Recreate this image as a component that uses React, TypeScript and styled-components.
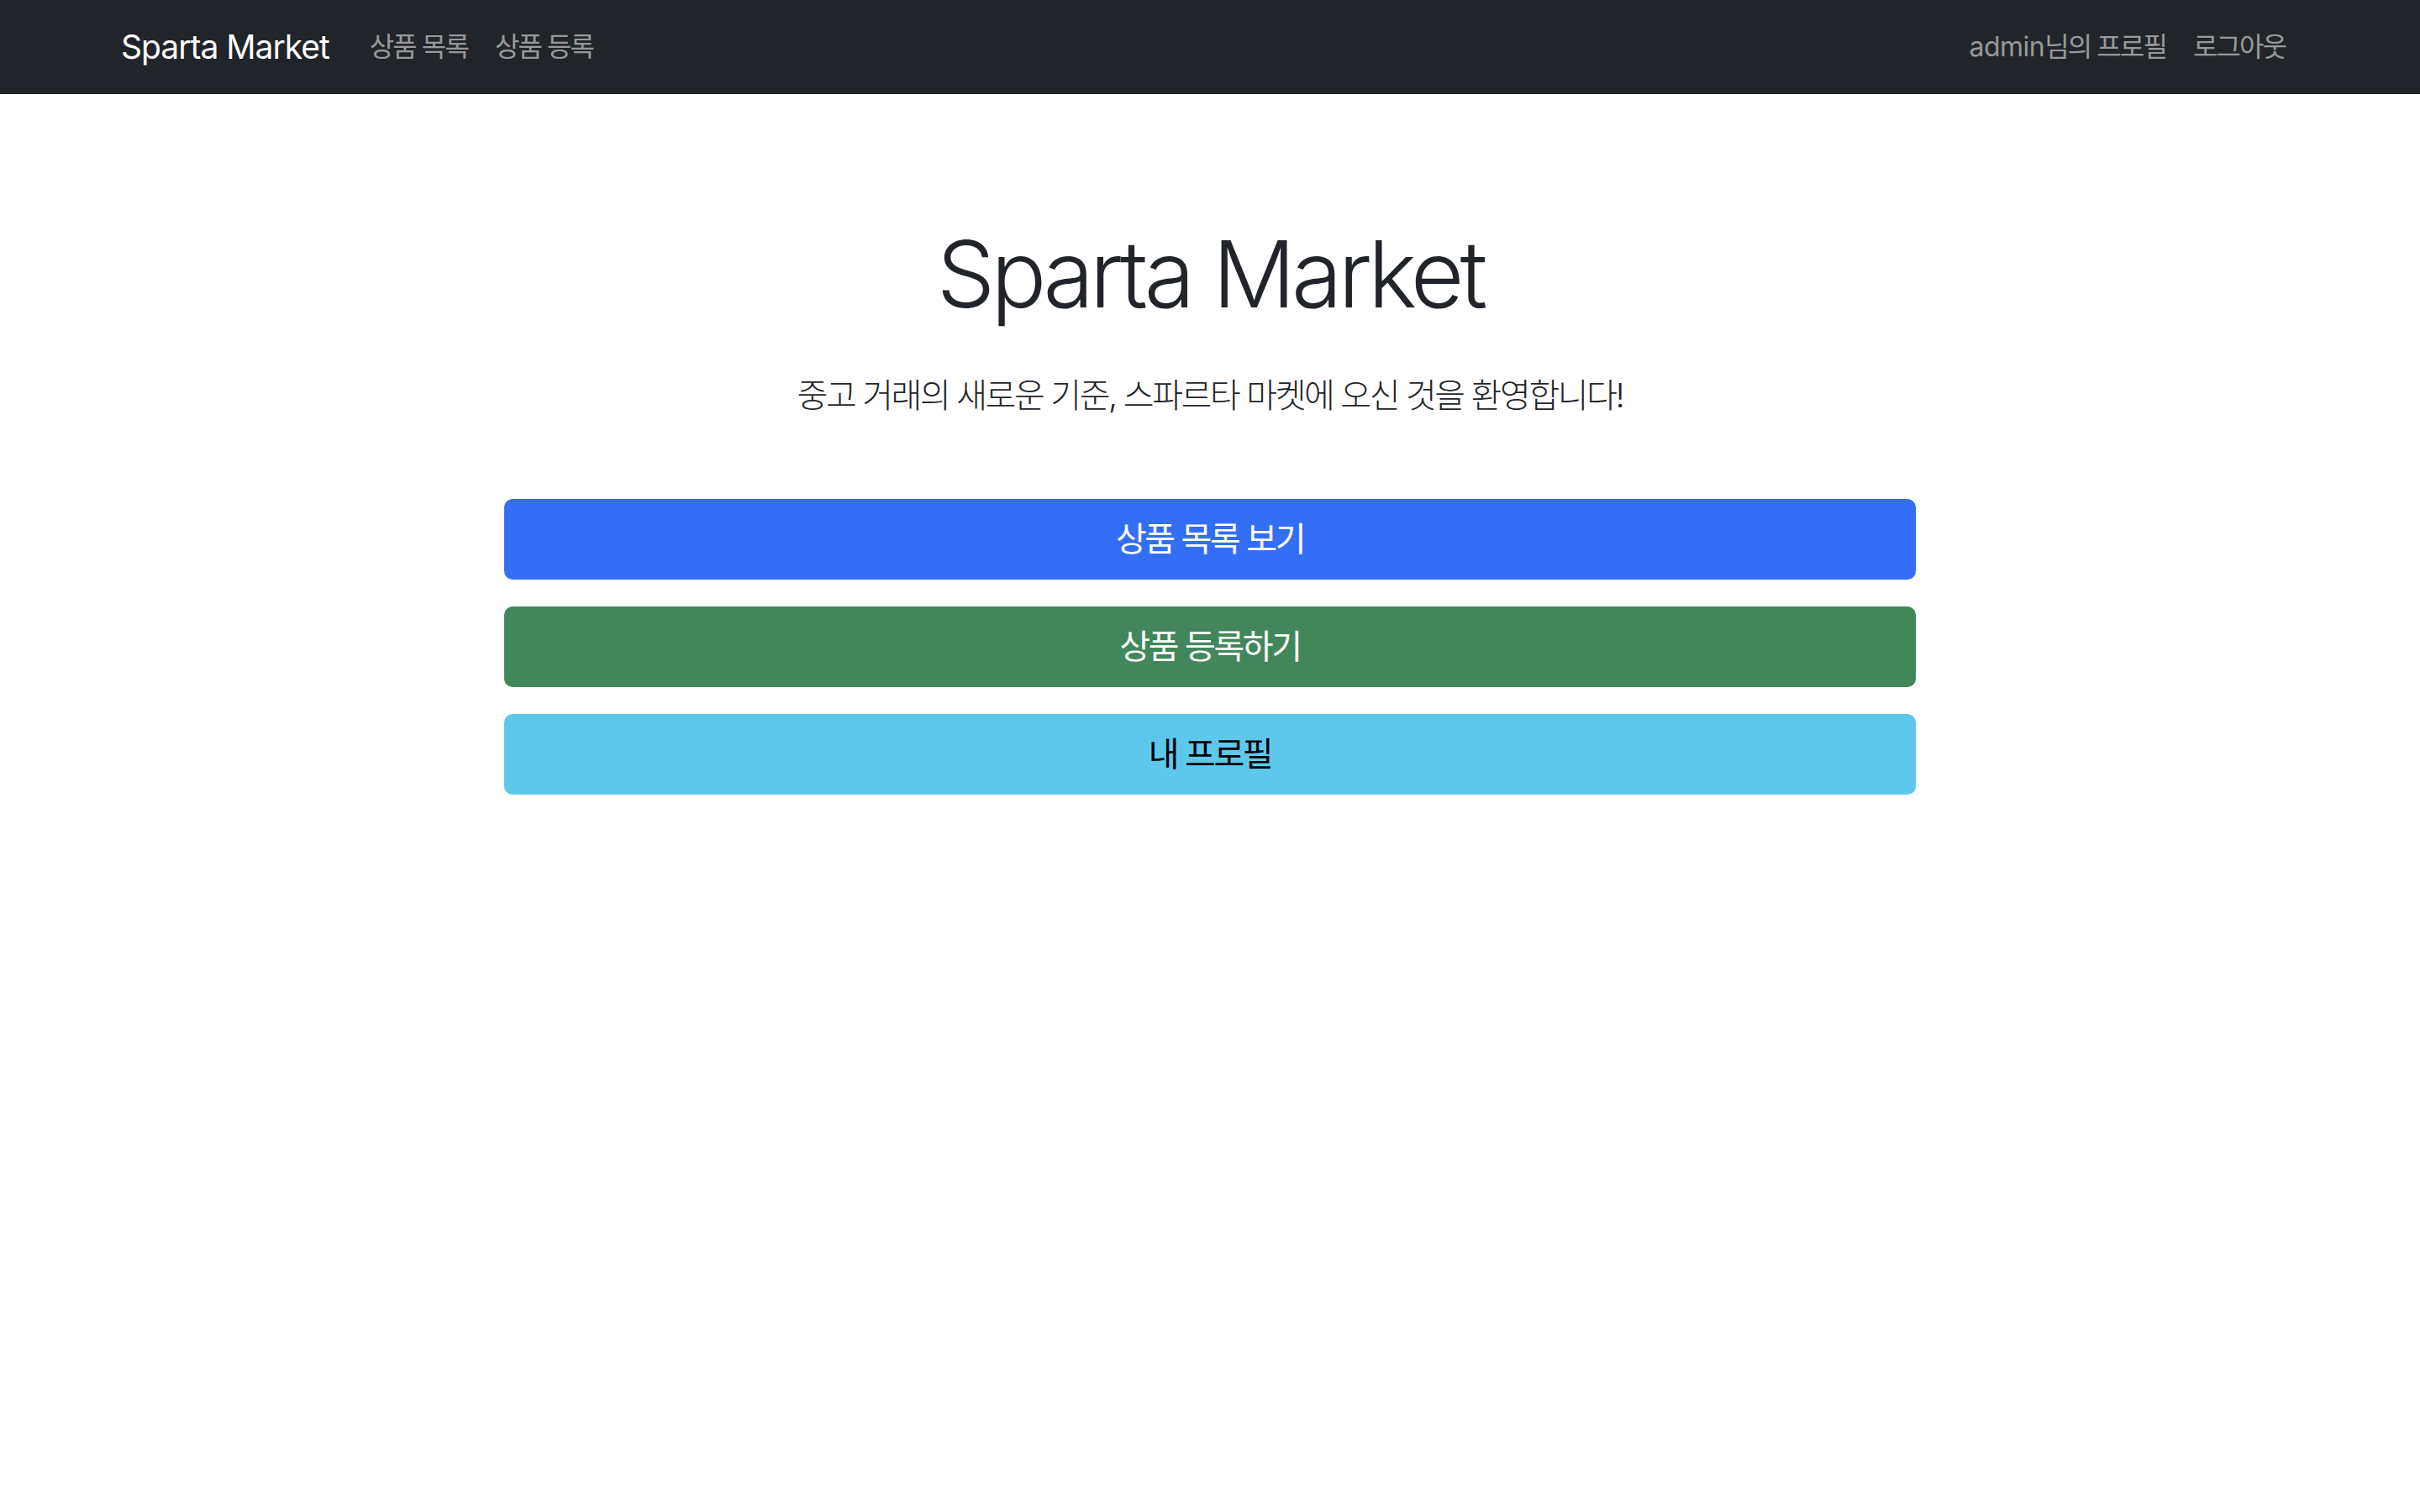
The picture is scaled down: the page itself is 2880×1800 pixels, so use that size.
import React from "react";
import styled, { createGlobalStyle } from "styled-components";

const GlobalStyle = createGlobalStyle`
  * { box-sizing: border-box; }
  html, body { margin: 0; padding: 0; background: #ffffff; }
  body {
    font-family: "Inter", "Noto Sans CJK KR", sans-serif;
    color: #212529;
    -webkit-font-smoothing: antialiased;
  }
`;

const KO_SPACING = "-0.06em";

const Navbar = styled.nav`
  background: #212529;
  height: 112px;
  display: flex;
  align-items: center;
`;

const Container = styled.div`
  width: 100%;
  max-width: 2640px;
  margin: 0 auto;
  padding: 0 24px;
`;

const NavInner = styled(Container)`
  display: flex;
  align-items: center;
`;

const Brand = styled.a`
  font-size: 39px;
  line-height: 60px;
  padding: 10px 0;
  margin-right: 32px;
  color: #ffffff;
  text-decoration: none;
  white-space: nowrap;
  letter-spacing: -1px;
`;

const NavList = styled.div<{ $end?: boolean }>`
  display: flex;
  align-items: center;
  margin-left: ${(p) => (p.$end ? "auto" : "0")};
`;

const NavLink = styled.a`
  font-size: 32px;
  line-height: 48px;
  padding: 16px 16px;
  color: rgba(255, 255, 255, 0.55);
  text-decoration: none;
  white-space: nowrap;
  letter-spacing: ${KO_SPACING};
`;

const Latin = styled.span`
  letter-spacing: -0.5px;
`;

const Hero = styled(Container)`
  padding-top: 147px;
  text-align: center;
`;

const Title = styled.h1`
  margin: 0 0 48px;
  font-size: 110px;
  font-weight: 300;
  line-height: 134px;
  letter-spacing: -5px;
  color: #212529;
`;

const Lead = styled.p`
  margin: 0 0 93px;
  font-size: 40px;
  font-weight: 300;
  line-height: 1.5;
  color: #212529;
  letter-spacing: ${KO_SPACING};
`;

const ButtonStack = styled.div`
  display: grid;
  gap: 32px;
  width: 1680px;
  margin: 0 auto;
`;

const variants = {
  primary: { bg: "#336ef4", fg: "#ffffff" },
  success: { bg: "#41875a", fg: "#ffffff" },
  info: { bg: "#5ec8ec", fg: "#000000" },
};

const ActionButton = styled.a<{ $variant: keyof typeof variants }>`
  display: block;
  height: 96px;
  padding: 16px 32px;
  border: 2px solid ${(p) => variants[p.$variant].bg};
  border-radius: 10px;
  background: ${(p) => variants[p.$variant].bg};
  color: ${(p) => variants[p.$variant].fg};
  font-size: 40px;
  font-weight: 400;
  line-height: 60px;
  text-align: center;
  text-decoration: none;
  letter-spacing: ${KO_SPACING};
`;

export default function App() {
  return (
    <>
      <GlobalStyle />
      <Navbar>
        <NavInner>
          <Brand href="#">Sparta Market</Brand>
          <NavList>
            <NavLink href="#">상품 목록</NavLink>
            <NavLink href="#">상품 등록</NavLink>
          </NavList>
          <NavList $end>
            <NavLink href="#">
              <Latin>admin</Latin>님의 프로필
            </NavLink>
            <NavLink href="#">로그아웃</NavLink>
          </NavList>
        </NavInner>
      </Navbar>
      <Hero>
        <Title>Sparta Market</Title>
        <Lead>중고 거래의 새로운 기준, 스파르타 마켓에 오신 것을 환영합니다!</Lead>
        <ButtonStack>
          <ActionButton href="#" $variant="primary">상품 목록 보기</ActionButton>
          <ActionButton href="#" $variant="success">상품 등록하기</ActionButton>
          <ActionButton href="#" $variant="info">내 프로필</ActionButton>
        </ButtonStack>
      </Hero>
    </>
  );
}
